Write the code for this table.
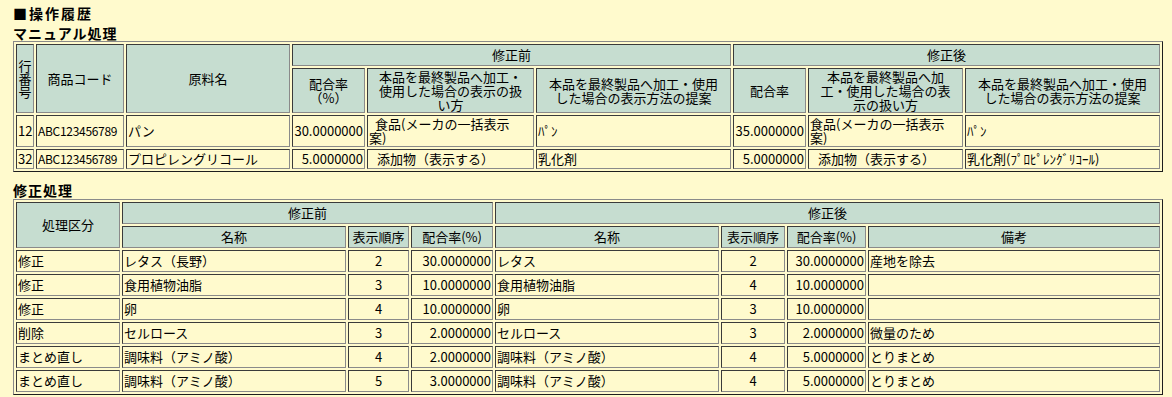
const TABLE =
  'table-fixed border-separate border-spacing-[2px] border border-t-[#8a8a8a] border-l-[#8a8a8a] border-r-[#1e1e1e] border-b-[#1e1e1e] text-[13px] leading-[14px]'
const TH =
  'border border-t-[#3a3a3a] border-l-[#3a3a3a] border-r-[#8a8a8a] border-b-[#8a8a8a] bg-[#c6ddd0] px-px text-center align-middle font-normal'
const TD =
  'border border-t-[#3a3a3a] border-l-[#3a3a3a] border-r-[#8a8a8a] border-b-[#8a8a8a] px-px align-middle whitespace-nowrap overflow-hidden'

const FIXES = [
  { kind: '修正', bName: 'レタス（長野）', bOrd: 2, bRate: '30.0000000', aName: 'レタス', aOrd: 2, aRate: '30.0000000', note: '産地を除去' },
  { kind: '修正', bName: '食用植物油脂', bOrd: 3, bRate: '10.0000000', aName: '食用植物油脂', aOrd: 4, aRate: '10.0000000', note: '' },
  { kind: '修正', bName: '卵', bOrd: 4, bRate: '10.0000000', aName: '卵', aOrd: 3, aRate: '10.0000000', note: '' },
  { kind: '削除', bName: 'セルロース', bOrd: 3, bRate: '2.0000000', aName: 'セルロース', aOrd: 3, aRate: '2.0000000', note: '微量のため' },
  { kind: 'まとめ直し', bName: '調味料（アミノ酸）', bOrd: 4, bRate: '2.0000000', aName: '調味料（アミノ酸）', aOrd: 4, aRate: '5.0000000', note: 'とりまとめ' },
  { kind: 'まとめ直し', bName: '調味料（アミノ酸）', bOrd: 5, bRate: '3.0000000', aName: '調味料（アミノ酸）', aOrd: 4, aRate: '5.0000000', note: 'とりまとめ' },
]

export default function App() {
  return (
    <div className="min-h-screen bg-[#fffacd] px-[13px] pt-[4px] text-black font-['Noto_Sans_CJK_JP',sans-serif]">
      <h2 className="text-[14px] font-bold leading-[18px] tracking-[2px]">■操作履歴</h2>

      {/* マニュアル処理 */}
      <h3 className="mt-[3px] text-[14px] font-bold leading-[16px] tracking-[1px]">マニュアル処理</h3>
      <table className={`${TABLE} w-[1150px]`}>
        <colgroup>
          <col className="w-[18px]" />
          <col className="w-[88px]" />
          <col className="w-[164px]" />
          <col className="w-[73px]" />
          <col className="w-[167px]" />
          <col className="w-[195px]" />
          <col className="w-[73px]" />
          <col className="w-[155px]" />
          <col className="w-[195px]" />
        </colgroup>
        <thead>
          <tr>
            <th rowSpan={2} className={`${TH} leading-[13px]`}>行<br />番<br />号</th>
            <th rowSpan={2} className={TH}>商品コード</th>
            <th rowSpan={2} className={TH}>原料名</th>
            <th colSpan={3} className={`${TH} h-[22px]`}>修正前</th>
            <th colSpan={3} className={TH}>修正後</th>
          </tr>
          <tr>
            <th className={`${TH} h-[45px]`}>配合率<br />（%）</th>
            <th className={TH}>本品を最終製品へ加工・<br />使用した場合の表示の扱<br />い方</th>
            <th className={TH}>本品を最終製品へ加工・使用<br />した場合の表示方法の提案</th>
            <th className={TH}>配合率</th>
            <th className={TH}>本品を最終製品へ加<br />工・使用した場合の表<br />示の扱い方</th>
            <th className={TH}>本品を最終製品へ加工・使用<br />した場合の表示方法の提案</th>
          </tr>
        </thead>
        <tbody>
          <tr>
            <td className={`${TD} h-[32px]`}>12</td>
            <td className={`${TD} text-[12px] tracking-[-0.3px]`}>ABC123456789</td>
            <td className={TD}>パン</td>
            <td className={`${TD} text-right`}>30.0000000</td>
            <td className={TD}><span className="ml-[6px]">食品(メーカの一括表示</span><br />案)</td>
            <td className={TD}>ﾊﾟﾝ</td>
            <td className={`${TD} text-right`}>35.0000000</td>
            <td className={TD}>食品(メーカの一括表示<br />案)</td>
            <td className={TD}>ﾊﾟﾝ</td>
          </tr>
          <tr>
            <td className={`${TD} h-[20px]`}>32</td>
            <td className={`${TD} text-[12px] tracking-[-0.3px]`}>ABC123456789</td>
            <td className={TD}>プロピレングリコール</td>
            <td className={`${TD} text-right`}>5.0000000</td>
            <td className={TD}><span className="ml-[8px]">添加物（表示する）</span></td>
            <td className={TD}>乳化剤</td>
            <td className={`${TD} text-right`}>5.0000000</td>
            <td className={TD}><span className="ml-[8px]">添加物（表示する）</span></td>
            <td className={TD}>乳化剤(ﾌﾟﾛﾋﾟﾚﾝｸﾞﾘｺｰﾙ)</td>
          </tr>
        </tbody>
      </table>

      {/* 修正処理 */}
      <h3 className="mt-[10px] text-[14px] font-bold leading-[16px] tracking-[1px]">修正処理</h3>
      <table className={`${TABLE} mt-px w-[1150px]`}>
        <colgroup>
          <col className="w-[104px]" />
          <col className="w-[224px]" />
          <col className="w-[61px]" />
          <col className="w-[82px]" />
          <col className="w-[224px]" />
          <col className="w-[64px]" />
          <col className="w-[79px]" />
          <col className="w-[292px]" />
        </colgroup>
        <thead>
          <tr>
            <th rowSpan={2} className={TH}>処理区分</th>
            <th colSpan={3} className={`${TH} h-[22px]`}>修正前</th>
            <th colSpan={4} className={TH}>修正後</th>
          </tr>
          <tr>
            <th className={`${TH} h-[22px]`}>名称</th>
            <th className={TH}>表示順序</th>
            <th className={TH}>配合率(%)</th>
            <th className={TH}>名称</th>
            <th className={TH}>表示順序</th>
            <th className={TH}>配合率(%)</th>
            <th className={TH}>備考</th>
          </tr>
        </thead>
        <tbody>
          {FIXES.map((r, i) => (
            <tr key={i}>
              <td className={`${TD} h-[22px]`}>{r.kind}</td>
              <td className={TD}>{r.bName}</td>
              <td className={`${TD} text-center`}>{r.bOrd}</td>
              <td className={`${TD} text-right`}>{r.bRate}</td>
              <td className={TD}>{r.aName}</td>
              <td className={`${TD} text-center`}>{r.aOrd}</td>
              <td className={`${TD} text-right`}>{r.aRate}</td>
              <td className={TD}>{r.note}</td>
            </tr>
          ))}
        </tbody>
      </table>
    </div>
  )
}
